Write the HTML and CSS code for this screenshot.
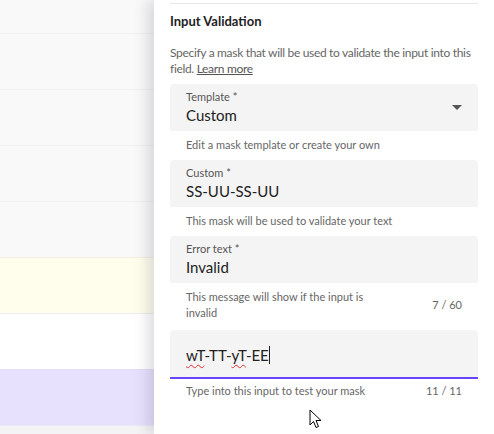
FILE: index.html
```html
<!DOCTYPE html>
<html>
<head>
<meta charset="utf-8">
<link rel="stylesheet" href="styles.css">
</head>
<body>
<div class="app">
  <div class="list">
    <div class="row"></div>
    <div class="row"></div>
    <div class="row"></div>
    <div class="row"></div>
    <div class="row"></div>
    <div class="row yellow"></div>
    <div class="row white"></div>
    <div class="row lavender"></div>
    <div class="row last"></div>
  </div>
  <div class="panel">
    <div class="content">
      <div class="topline"></div>
      <h2 class="title">Input Validation</h2>
      <p class="desc">Specify a mask that will be used to validate the input into this field. <a class="link">Learn more</a></p>

      <div class="field select">
        <div class="field-text">
          <div class="label">Template *</div>
          <div class="value">Custom</div>
        </div>
        <svg class="arrow" width="10" height="5" viewBox="0 0 10 5"><path d="M0 0H10L5 5Z" fill="#555"/></svg>
      </div>
      <div class="helper"><span>Edit a mask template or create your own</span></div>

      <div class="field">
        <div class="field-text">
          <div class="label">Custom *</div>
          <div class="value">SS-UU-SS-UU</div>
        </div>
      </div>
      <div class="helper"><span>This mask will be used to validate your text</span></div>

      <div class="field">
        <div class="field-text">
          <div class="label">Error text *</div>
          <div class="value">Invalid</div>
        </div>
      </div>
      <div class="helper two"><span class="msg">This message will show if the input is invalid</span><span class="count">7 / 60</span></div>

      <div class="field test">
        <div class="field-text">
          <div class="value"><span class="sp">wT</span>-TT-<span class="sp">yT</span>-EE<span class="caret"></span></div>
        </div>
      </div>
      <div class="helper"><span>Type into this input to test your mask</span><span class="count">11 / 11</span></div>
      <div class="bottomline"></div>
    </div>
    <svg class="pointer" width="14" height="20" viewBox="0 0 14 20"><path d="M1 1V16L4.5 12.5L7 18.5L9.5 17.5L7 11.5H12Z" fill="#fff" stroke="#000" stroke-width="1"/></svg>
  </div>
</div>
</body>
</html>
```

FILE: styles.css
```css
html, body {
  margin: 0;
  padding: 0;
  width: 494px;
  height: 434px;
  overflow: hidden;
  background: #fff;
  font-family: "Source Sans Pro", Lato, "Liberation Sans", sans-serif;
}
.app {
  display: flex;
  height: 434px;
}
.list {
  width: 154px;
  flex: none;
  display: flex;
  flex-direction: column;
  background: #f9f9f9;
}
.row {
  height: 56px;
  flex: none;
  border-top: 1px solid #f1f1f1;
  box-sizing: border-box;
  background: #f9f9f9;
}
.row:first-child {
  height: 33px;
  border-top: none;
}
.row.yellow { background: #fffdec; border-top-color: #f3efde; }
.row.white { background: #ffffff; border-top-color: #eeeeee; }
.row.lavender { background: #e7e1fd; border-top-color: #e3ddf7; }
.row.last { background: #f4f4f6; border-top-color: #ebe9f3; height: 20px; }
.panel {
  flex: 1;
  position: relative;
  background: #fff;
  box-shadow: -6px 0 14px rgba(60, 60, 90, 0.18);
}
.content {
  margin-left: 16px;
  width: 308px;
  display: flex;
  flex-direction: column;
}
.topline {
  height: 1px;
  background: #e8e8e8;
  margin-top: 3px;
}
.title {
  margin: 9px 0 0;
  font-size: 13px;
  font-weight: 700;
  color: #222;
  line-height: 16px;
}
.desc {
  margin: 16px 0 0;
  font-size: 12px;
  line-height: 16px;
  letter-spacing: -0.32px;
  color: #666;
}
.link {
  color: #555;
  text-decoration: underline;
}
.field {
  margin-top: 7px;
  height: 47px;
  background: #f4f4f4;
  border-radius: 4px 4px 0 0;
  display: flex;
  align-items: center;
  padding: 0 16px;
  box-sizing: border-box;
}
.field-text {
  flex: 1;
  display: flex;
  flex-direction: column;
}
.label {
  font-size: 11px;
  line-height: 13px;
  color: #555;
}
.value {
  font-size: 15px;
  line-height: 20px;
  color: #222;
  margin-top: 2px;
}
.arrow {
  margin-right: 0;
}
.helper {
  display: flex;
  justify-content: space-between;
  padding: 0 16px;
  font-size: 11px;
  line-height: 16px;
  color: #666;
  margin-top: 6px;
  height: 16px;
}
.helper.two {
  height: 32px;
  align-items: center;
}
.helper .msg {
  width: 180px;
}
.field.test {
  margin-top: 9px;
  height: 49px;
  border-bottom: 2px solid #6a45ff;
}
.field.test .value {
  margin-top: 0;
  padding-top: 2px;
}
.field.test + .helper {
  margin-top: 4px;
}
.sp {
  text-decoration: underline wavy #e03030;
  text-decoration-thickness: 1px;
  text-underline-offset: 3px;
}
.caret {
  display: inline-block;
  width: 1px;
  height: 18px;
  background: #222;
  vertical-align: -3px;
}
.bottomline {
  height: 1px;
  background: #e6e6e6;
  margin-top: 37px;
}
.pointer {
  position: absolute;
  left: 155px;
  top: 409px;
}
```
